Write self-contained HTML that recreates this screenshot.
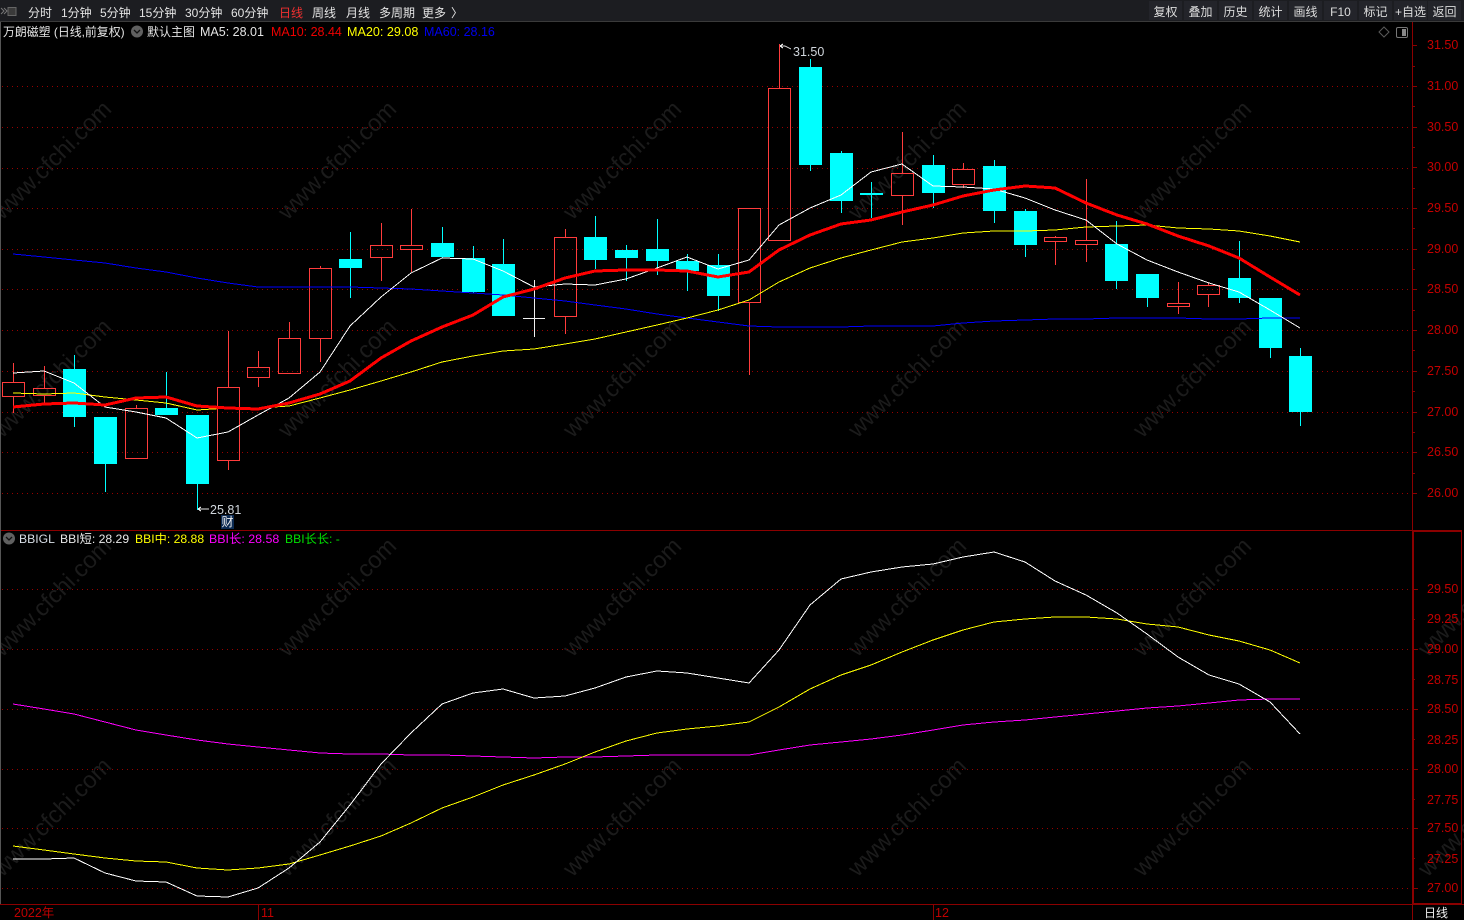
<!DOCTYPE html>
<html lang="zh">
<head>
<meta charset="utf-8">
<title>万朗磁塑</title>
<style>
html,body{margin:0;padding:0;background:#000;width:1464px;height:920px;overflow:hidden}
#p{position:relative;width:1464px;height:920px;background:#000;overflow:hidden;font-family:"Liberation Sans","Noto Sans CJK SC",sans-serif;font-size:12px;color:#e4e4e4}
#p svg{position:absolute;left:0;top:0}
.t{position:absolute;white-space:nowrap;line-height:14px;height:14px}
.bar{position:absolute;left:0;top:0;width:1464px;height:21px;background:#1c1d21;border-bottom:1px solid #3a3a3a}
.b{position:absolute;top:1px;height:19px;width:33px;background:#23242a;text-align:center;line-height:23px;color:#dcdcdc;white-space:nowrap}
.a{position:absolute;left:1427px;color:#c40000;font-size:12.5px;line-height:14px;white-space:nowrap}
</style>
</head>
<body>
<div id="p">
<svg width="1464" height="920" viewBox="0 0 1464 920" xmlns="http://www.w3.org/2000/svg">
<g font-family="Liberation Sans, sans-serif" font-size="23.6" fill="#1b1b1b" text-anchor="middle">
<text transform="translate(52 160) rotate(-45)" y="8">www.cfchi.com</text>
<text transform="translate(337 160) rotate(-45)" y="8">www.cfchi.com</text>
<text transform="translate(622 160) rotate(-45)" y="8">www.cfchi.com</text>
<text transform="translate(907 160) rotate(-45)" y="8">www.cfchi.com</text>
<text transform="translate(1192 160) rotate(-45)" y="8">www.cfchi.com</text>
<text transform="translate(52 378) rotate(-45)" y="8">www.cfchi.com</text>
<text transform="translate(337 378) rotate(-45)" y="8">www.cfchi.com</text>
<text transform="translate(622 378) rotate(-45)" y="8">www.cfchi.com</text>
<text transform="translate(907 378) rotate(-45)" y="8">www.cfchi.com</text>
<text transform="translate(1192 378) rotate(-45)" y="8">www.cfchi.com</text>
<text transform="translate(52 597) rotate(-45)" y="8">www.cfchi.com</text>
<text transform="translate(337 597) rotate(-45)" y="8">www.cfchi.com</text>
<text transform="translate(622 597) rotate(-45)" y="8">www.cfchi.com</text>
<text transform="translate(907 597) rotate(-45)" y="8">www.cfchi.com</text>
<text transform="translate(1192 597) rotate(-45)" y="8">www.cfchi.com</text>
<text transform="translate(1477 597) rotate(-45)" y="8">www.cfchi.com</text>
<text transform="translate(52 817) rotate(-45)" y="8">www.cfchi.com</text>
<text transform="translate(337 817) rotate(-45)" y="8">www.cfchi.com</text>
<text transform="translate(622 817) rotate(-45)" y="8">www.cfchi.com</text>
<text transform="translate(907 817) rotate(-45)" y="8">www.cfchi.com</text>
<text transform="translate(1192 817) rotate(-45)" y="8">www.cfchi.com</text>
<text transform="translate(1477 817) rotate(-45)" y="8">www.cfchi.com</text>
</g>
<g shape-rendering="crispEdges">
<path stroke="#990000" stroke-width="1" stroke-dasharray="1 4" fill="none" d="M2 86.5H1410M2 127.5H1410M2 168.5H1410M2 208.5H1410M2 249.5H1410M2 289.5H1410M2 330.5H1410M2 371.5H1410M2 412.5H1410M2 452.5H1410M2 493.5H1410M2 589.5H1410M2 649.5H1410M2 709.5H1410M2 769.5H1410M2 828.5H1410M2 888.5H1410"/>
<path fill="#8b0000" d="M0 530h1462v1H0zM0 904h1464v1H0zM1412 22h1v898h-1zM1412 531h2v373h-2zM1412 531h49v1h-49zM1461 531h1v373h-1zM1412 903h49v1h-49zM258 905h1v15h-1zM933 905h1v15h-1z"/>
<path fill="#8b0000" d="M1412 45h5v1h-5zM1412 86h5v1h-5zM1412 127h5v1h-5zM1412 167h5v1h-5zM1412 208h5v1h-5zM1412 249h5v1h-5zM1412 289h5v1h-5zM1412 330h5v1h-5zM1412 371h5v1h-5zM1412 412h5v1h-5zM1412 452h5v1h-5zM1412 493h5v1h-5zM1412 66h3v1h-3zM1412 106h3v1h-3zM1412 147h3v1h-3zM1412 188h3v1h-3zM1412 228h3v1h-3zM1412 269h3v1h-3zM1412 310h3v1h-3zM1412 350h3v1h-3zM1412 391h3v1h-3zM1412 432h3v1h-3zM1412 473h3v1h-3zM1412 589h6v1h-6zM1412 619h3v1h-3zM1412 649h6v1h-6zM1412 679h3v1h-3zM1412 709h6v1h-6zM1412 739h3v1h-3zM1412 769h6v1h-6zM1412 799h3v1h-3zM1412 828h6v1h-6zM1412 858h3v1h-3zM1412 888h6v1h-6z"/>
<path fill="#555" d="M0 22h1v882H0z"/>
<path fill="none" stroke="#ff3c3c" stroke-width="1" d="
M13.5 363V382M13.5 396V413M2.5 382.5H24.5V396.5H2.5Z
M44.5 366V388M44.5 395V405M33.5 388.5H55.5V395.5H33.5Z
M136.5 405V408M125.5 408.5H147.5V458.5H125.5Z
M228.5 331V387M228.5 460V470M217.5 387.5H239.5V460.5H217.5Z
M258.5 351V367M258.5 377V387M247.5 367.5H269.5V377.5H247.5Z
M289.5 322V338M278.5 338.5H300.5V373.5H278.5Z
M320.5 266V268M320.5 338V362M309.5 268.5H331.5V338.5H309.5Z
M381.5 223V245M381.5 257V281M370.5 245.5H392.5V257.5H370.5Z
M411.5 209V245M411.5 249V272M400.5 245.5H422.5V249.5H400.5Z
M565.5 229V237M565.5 316V334M554.5 237.5H576.5V316.5H554.5Z
M749.5 302V375M738.5 208.5H760.5V302.5H738.5Z
M779.5 44V88M768.5 88.5H790.5V240.5H768.5Z
M902.5 132V173M902.5 196V225M891.5 173.5H913.5V195.5H891.5Z
M963.5 163V169M963.5 184V188M952.5 169.5H974.5V184.5H952.5Z
M1055.5 236V237M1055.5 241V265M1044.5 237.5H1066.5V241.5H1044.5Z
M1086.5 179V240M1086.5 245V262M1075.5 240.5H1097.5V244.5H1075.5Z
M1178.5 282V303M1178.5 306V314M1167.5 303.5H1189.5V306.5H1167.5Z
M1208.5 283V285M1208.5 294V307M1197.5 285.5H1219.5V294.5H1197.5Z"/>
<path fill="#00ffff" d="
M63 369h23v48h-23zM74 355h1v72h-1z
M94 417h23v47h-23zM105 464h1v28h-1z
M155 408h23v7h-23zM166 372h1v36h-1z
M186 415h23v69h-23zM197 484h1v26h-1z
M339 259h23v9h-23zM350 232h1v66h-1z
M431 243h23v14h-23zM442 227h1v31h-1z
M462 258h23v34h-23zM473 246h1v47h-1z
M492 264h23v52h-23zM503 239h1v77h-1z
M584 237h23v23h-23zM595 216h1v53h-1z
M615 250h23v8h-23zM626 245h1v36h-1z
M646 249h23v12h-23zM657 219h1v56h-1z
M676 261h23v10h-23zM687 254h1v37h-1z
M707 265h23v31h-23zM718 254h1v57h-1z
M799 67h23v98h-23zM810 59h1v112h-1z
M830 153h23v48h-23zM841 151h1v62h-1z
M860 193h23v2h-23zM871 182h1v36h-1z
M922 165h23v28h-23zM933 155h1v53h-1z
M983 166h23v45h-23zM994 160h1v63h-1z
M1014 211h23v34h-23zM1025 209h1v48h-1z
M1105 244h23v37h-23zM1116 221h1v68h-1z
M1136 274h23v24h-23zM1147 298h1v9h-1z
M1228 278h23v20h-23zM1239 241h1v62h-1z
M1259 298h23v50h-23zM1270 348h1v10h-1z
M1289 356h23v56h-23zM1300 348h1v78h-1z"/>
<path fill="#f0f0f0" d="M534 280h1v57h-1zM523 318h22v1h-22z"/>
</g>
<g fill="none" stroke-linejoin="round" shape-rendering="crispEdges">
<polyline stroke="#0000ff" stroke-width="1" points="13,254 44,257 74,260 105,263 136,268 166,272 197,278 228,283 258,287 289,287 320,287 350,287 381,288 411,289 442,291 473,293 503,295 534,298 565,301 595,305 626,309 657,314 687,318 718,322 749,326 779,327 810,327 841,327 871,326 902,326 933,326 963,323 994,321 1025,320 1055,319 1086,319 1117,318 1147,318 1178,318 1209,319 1239,319 1270,318 1300,318"/>
<polyline stroke="#ffff00" stroke-width="1" points="13,393 44,394 74,393 105,397 136,400 166,403 197,410 228,408 258,408 289,406 320,398 350,390 381,381 411,372 442,362 473,356 503,351 534,349 565,344 595,339 626,332 657,325 687,318 718,310 749,300 779,282 810,268 841,258 871,250 902,242 933,238 963,233 994,231 1025,231 1055,230 1086,227 1117,226 1147,225 1178,228 1209,229 1239,231 1270,236 1300,242"/>
<polyline stroke="#ffffff" stroke-width="1" points="13,373 44,371 74,383 105,407 136,412 166,418 197,438 228,432 258,415 289,398 320,372 350,326 381,297 411,273 442,258 473,259 503,271 534,287 565,284 595,285 626,279 657,268 687,257 718,269 749,260 779,225 810,208 841,195 871,172 902,164 933,186 963,187 994,189 1025,198 1055,210 1086,220 1117,244 1147,260 1178,272 1209,283 1239,292 1270,310 1300,328"/>
<polyline stroke="#ff0000" stroke-width="3" points="13,407 44,404 74,403 105,405 136,398 166,397 197,406 228,408 258,409 289,403 320,394 350,381 381,358 411,341 442,327 473,315 503,297 534,289 565,278 595,271 626,270 657,270 687,271 718,277 749,272 779,250 810,235 841,224 871,220 902,212 933,205 963,196 994,190 1025,186 1055,188 1086,203 1117,215 1147,224 1178,236 1209,246 1239,258 1270,277 1300,295"/>
<polyline stroke="#ff00ff" stroke-width="1" points="13,704 44,709 74,714 105,722 136,730 166,735 197,740 228,744 258,747 289,750 320,753 350,754 381,754 411,755 442,755 473,756 503,757 534,758 565,757 595,757 626,756 657,755 687,755 718,755 749,755 779,750 810,745 841,742 871,739 902,735 933,730 963,725 994,722 1025,720 1055,717 1086,714 1117,711 1147,708 1178,706 1209,703 1239,700 1270,699 1300,699"/>
<polyline stroke="#ffff00" stroke-width="1" points="13,846 44,850 74,854 105,858 136,861 166,862 197,868 228,870 258,868 289,864 320,855 350,846 381,836 411,823 442,808 473,797 503,785 534,775 565,764 595,752 626,741 657,733 687,729 718,726 749,722 779,707 810,689 841,675 871,665 902,652 933,640 963,630 994,622 1025,619 1055,617 1086,617 1117,619 1147,624 1178,627 1209,635 1239,641 1270,650 1300,663"/>
<polyline stroke="#ffffff" stroke-width="1" points="13,859 44,859 74,858 105,873 136,881 166,882 197,896 228,897 258,888 289,868 320,842 350,805 381,764 411,733 442,704 473,693 503,689 534,698 565,696 595,688 626,677 657,671 687,673 718,678 749,683 779,650 810,605 841,579 871,572 902,567 933,564 963,557 994,552 1025,562 1055,581 1086,595 1117,613 1147,634 1178,657 1209,675 1239,684 1270,702 1300,734"/>
</g>
<g fill="none" stroke="#e8e8e8" stroke-width="1" shape-rendering="crispEdges">
<path d="M780 46h5M780 46l3-2M780 46l3 2M785 46l6 3"/>
<path d="M198 509h11M198 509l3-2M198 509l3 2"/>
</g>
<g fill="none">
<path d="M1384 27l5 5-5 5-5-5z" stroke="#5a5a5a"/>
<rect x="1396.5" y="27.5" width="11" height="10" rx="1.5" stroke="#777"/>
<rect x="1402" y="29" width="4" height="7" fill="#888"/>
<circle cx="137" cy="31.5" r="6" fill="#606060"/>
<path d="M134 30l3 3 3-3" stroke="#111" stroke-width="1.3"/>
<circle cx="9" cy="538.5" r="6" fill="#606060"/>
<path d="M6 537l3 3 3-3" stroke="#111" stroke-width="1.3"/>
</g>
</svg>

<div class="bar"></div>
<svg width="20" height="21" viewBox="0 0 20 21" xmlns="http://www.w3.org/2000/svg" fill="none">
<path d="M1 8l3 3-3 3M4 8l3 3-3 3" stroke="#777"/>
<rect x="8" y="7.5" width="8" height="8" stroke="#666" fill="#3a3a3a"/>
</svg>
<div class="t" style="left:28px;top:6px">分时</div>
<div class="t" style="left:61px;top:6px">1分钟</div>
<div class="t" style="left:100px;top:6px">5分钟</div>
<div class="t" style="left:139px;top:6px">15分钟</div>
<div class="t" style="left:185px;top:6px">30分钟</div>
<div class="t" style="left:231px;top:6px">60分钟</div>
<div class="t" style="left:279px;top:6px;color:#f03030">日线</div>
<div class="t" style="left:312px;top:6px">周线</div>
<div class="t" style="left:346px;top:6px">月线</div>
<div class="t" style="left:379px;top:6px">多周期</div>
<div class="t" style="left:422px;top:6px">更多</div>
<div class="t" style="left:451px;top:6px">〉</div>

<div class="b" style="left:1149px">复权</div>
<div class="b" style="left:1184px">叠加</div>
<div class="b" style="left:1219px">历史</div>
<div class="b" style="left:1254px">统计</div>
<div class="b" style="left:1289px">画线</div>
<div class="b" style="left:1324px">F10</div>
<div class="b" style="left:1359px">标记</div>
<div class="b" style="left:1394px">+自选</div>
<div class="b" style="left:1428px">返回</div>

<div class="t" style="left:3px;top:25px;font-size:11.9px">万朗磁塑 (日线,前复权)</div>
<div class="t" style="left:147px;top:25px">默认主图</div>
<div class="t" style="left:200px;top:25px;font-size:12.5px">MA5: 28.01</div>
<div class="t" style="left:271px;top:25px;font-size:12.5px;color:#ee0000">MA10: 28.44</div>
<div class="t" style="left:347px;top:25px;font-size:12.6px;color:#ffff00">MA20: 29.08</div>
<div class="t" style="left:424px;top:25px;font-size:12.5px;color:#0000ee">MA60: 28.16</div>

<div class="t" style="left:793px;top:45px;font-size:12.5px;color:#d0d6dc">31.50</div>
<div class="t" style="left:210px;top:503px;font-size:12.5px;color:#d0d6dc">25.81</div>
<div class="t" style="left:221px;top:515px;width:13px;text-align:center;background:#0b2a52;color:#f0f0f0">财</div>

<div class="t" style="left:19px;top:532px;font-size:12.2px;color:#d8dee6">BBIGL</div>
<div class="t" style="left:60px;top:532px;font-size:12.2px;color:#e8e8e8">BBI短: 28.29</div>
<div class="t" style="left:135px;top:532px;font-size:12.2px;color:#ffff00">BBI中: 28.88</div>
<div class="t" style="left:209px;top:532px;font-size:12.4px;color:#ff00ff">BBI长: 28.58</div>
<div class="t" style="left:285px;top:532px;font-size:12.2px;color:#00e000">BBI长长: -</div>

<div class="a" style="top:38px">31.50</div>
<div class="a" style="top:79px">31.00</div>
<div class="a" style="top:120px">30.50</div>
<div class="a" style="top:160px">30.00</div>
<div class="a" style="top:201px">29.50</div>
<div class="a" style="top:242px">29.00</div>
<div class="a" style="top:282px">28.50</div>
<div class="a" style="top:323px">28.00</div>
<div class="a" style="top:364px">27.50</div>
<div class="a" style="top:405px">27.00</div>
<div class="a" style="top:445px">26.50</div>
<div class="a" style="top:486px">26.00</div>

<div class="a" style="top:582px">29.50</div>
<div class="a" style="top:612px">29.25</div>
<div class="a" style="top:642px">29.00</div>
<div class="a" style="top:673px">28.75</div>
<div class="a" style="top:702px">28.50</div>
<div class="a" style="top:733px">28.25</div>
<div class="a" style="top:762px">28.00</div>
<div class="a" style="top:793px">27.75</div>
<div class="a" style="top:821px">27.50</div>
<div class="a" style="top:852px">27.25</div>
<div class="a" style="top:881px">27.00</div>

<div class="t" style="left:14px;top:906px;color:#c00000;font-size:12.5px">2022年</div>
<div class="t" style="left:261px;top:906px;color:#c00000;font-size:12.5px">11</div>
<div class="t" style="left:935px;top:906px;color:#c00000;font-size:12.5px">12</div>
<div class="t" style="left:1424px;top:906px;color:#eee">日线</div>
</div>
</body>
</html>
